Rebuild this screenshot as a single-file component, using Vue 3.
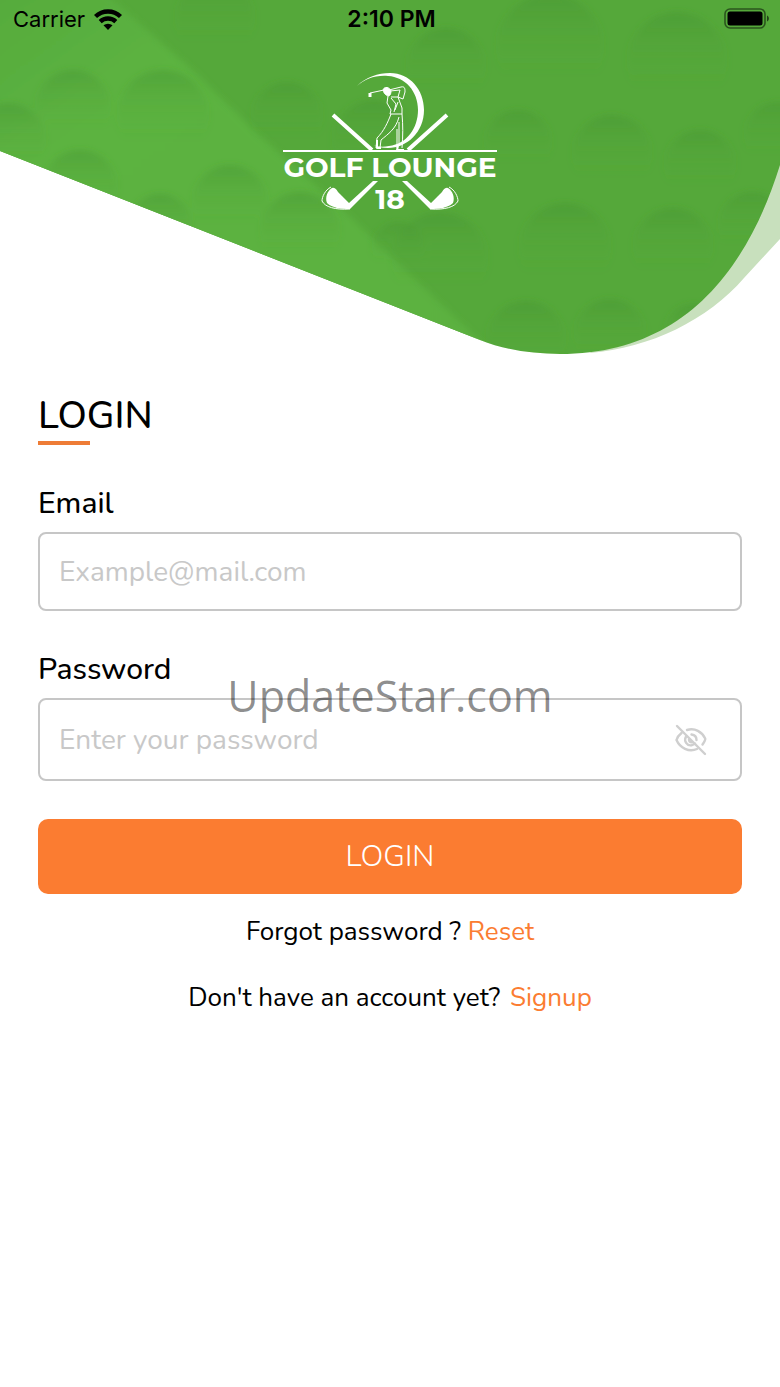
<script setup>
import { ref } from 'vue'

const email = ref('')
const password = ref('')
const showPassword = ref(false)

// Dimples of the golf ball texture: centre x, top y, radius
const dimples = [
  [8, 103, 38], [73, 70, 38], [163, 70, 46], [80, 150, 38], [230, 165, 38],
  [160, 194, 32], [287, 82, 36], [374, 100, 42], [446, 28, 40], [300, 192, 40],
  [398, 222, 26], [440, 212, 48], [518, 110, 34], [550, -6, 54], [677, 12, 50],
  [612, 115, 40], [700, 130, 36], [778, 102, 34], [565, 203, 46], [673, 208, 40],
  [752, 192, 34], [526, 301, 40], [610, 299, 36], [694, 304, 30], [215, -20, 40],
]
</script>

<template>
  <main class="screen">
    <header class="hero">
      <svg class="art" viewBox="0 0 780 356" aria-hidden="true">
        <defs>
          <linearGradient id="dimple" x1="0" y1="0" x2="0" y2="1">
            <stop offset="0" stop-color="#43922f" stop-opacity="0.42" />
            <stop offset="0.3" stop-color="#4c9a36" stop-opacity="0.2" />
            <stop offset="0.75" stop-color="#55a83b" stop-opacity="0" />
          </linearGradient>
          <linearGradient id="shine" x1="0" y1="0" x2="1" y2="1">
            <stop offset="0" stop-color="#56aa3c" />
            <stop offset="0.3" stop-color="#5cb341" />
            <stop offset="1" stop-color="#5bb13f" />
          </linearGradient>
          <filter id="soft" x="-10%" y="-10%" width="120%" height="120%">
            <feGaussianBlur stdDeviation="3" />
          </filter>
          <clipPath id="wave">
            <path d="M0 0H780V165C744 280 676 354 560 354C532 354 505 350 480 340L0 151Z" />
          </clipPath>
        </defs>
        <path fill="#c8e0bd" d="M780 150V239L744 278C708 320 650 348 590 353Z" />
        <g clip-path="url(#wave)">
          <path fill="#55a83a" d="M0 0H780V356H0Z" />
          <path
            fill="url(#shine)"
            filter="url(#soft)"
            d="M-20 -20H90L190 68L260 136L345 212L420 284L500 360H-20Z"
          />
          <g filter="url(#soft)">
            <circle
              v-for="([x, top, r], i) in dimples"
              :key="i"
              :cx="x"
              :cy="top + r"
              :r="r"
              fill="url(#dimple)"
            />
          </g>
        </g>

        <g class="logo" fill="none" stroke="#fff">
          <path
            fill="#fff"
            stroke="none"
            d="M357 86C366 77 378 73 390 73C410 73 424 90 424 110C424 132 407 148 388 148C382 148 377 147 373 145C378 147 384 147 389 146C407 144 418 128 418 110C418 91 405 77 388 76C375 75 365 79 357 86Z"
          />
          <path stroke-width="4" d="M333 115L372 150M447 115L408 150" />
          <path stroke-width="2" d="M283 151H497" />
          <path
            fill="#fff"
            stroke="none"
            d="M332 188Q335 187 338 192L349 203L373 181H378L350 209C341 209 332 208 327 203C325 198 327 191 332 188Z"
          />
          <path
            fill="#fff"
            stroke="none"
            d="M448 188Q445 187 442 192L431 203L407 181H402L430 209C439 209 448 208 453 203C455 198 453 191 448 188Z"
          />
          <path d="M331 187C325 190 322 197 322 201C325 207 335 210 350 209" />
          <path d="M449 187C455 190 458 197 458 201C455 207 445 210 430 209" />

          <path d="M370 93L384 90" />
          <path stroke-width="3" d="M370 93V97" />
          <path fill="#fff" d="M383 90C384 86 390 87 391 91C391 94 390 96 388 96C386 95 384 94 383 90Z" />
          <path d="M389 90L401 87C405 86 405 89 405 92L403 99L398 97L400 90L390 91" />
          <path d="M388 96L387 103L391 110L390 114H402V108L398 97L391 97M391 98L396 104L394 112M398 102L395 110" />
          <path d="M391 114C388 122 384 131 377 138L376 148M402 114C403 125 403 136 402 148M399 117C396 129 388 134 381 140L380 148M397 129V148M399 122V144" />
          <path stroke-width="2" d="M377 140V148H381M398 146L397 150H404" />
        </g>
        <g class="logo-text" fill="#fff" text-anchor="middle">
          <text x="390" y="177" font-size="28">GOLF LOUNGE</text>
          <text x="390" y="209" font-size="28">18</text>
        </g>
      </svg>

      <div class="status">
        <span class="carrier">
          Carrier
          <svg width="28" height="21" viewBox="0 0 28 21" aria-hidden="true">
            <g fill="none" stroke="#000" stroke-width="4.400">
              <path d="M1.500 7.500A18 18 0 0 1 26.500 7.500" />
              <path d="M6.200 12.600A11.500 11.500 0 0 1 21.800 12.600" />
            </g>
            <path d="M9.500 16.300A7 7 0 0 1 18.500 16.300L14 21Z" />
          </svg>
        </span>
        <time class="clock">2:10 PM</time>
        <svg class="battery" width="46" height="22" viewBox="0 0 46 22" aria-hidden="true">
          <rect x="1" y="1" width="40" height="19" rx="5" fill="none" stroke="#000" stroke-opacity=".5" stroke-width="1.600" />
          <rect x="3.500" y="3.500" width="35" height="14" rx="2.500" />
          <path d="M43 7.500C45.500 8.500 45.500 12.500 43 13.500Z" fill-opacity=".6" />
        </svg>
      </div>
    </header>

    <form class="form" @submit.prevent>
      <h1>LOGIN</h1>

      <label for="email">Email</label>
      <input id="email" v-model="email" class="field" type="email" placeholder="Example@mail.com" />

      <label for="password">Password</label>
      <div class="field password">
        <input
          id="password"
          v-model="password"
          :type="showPassword ? 'text' : 'password'"
          placeholder="Enter your password"
        />
        <button
          class="eye"
          type="button"
          aria-label="Show password"
          @click="showPassword = !showPassword"
        >
          <svg width="32" height="32" viewBox="0 0 32 32" fill="none" stroke="#cfcfcf" stroke-width="2.400" stroke-linecap="round">
            <path d="M12 6C20 3.500 27 8 30.200 14.500C30.500 15.500 30 17 27.500 20.500" />
            <path d="M6.500 9C4 11 2 14 1.500 16C5 24 14 28.500 22 25" />
            <path d="M11 12.500C8.500 17 12 22 16.500 21.300C18 21 19 20.500 20 19.500" />
            <path d="M16.500 10.500C20 11 21.500 13 21.500 16" />
            <path d="M14 15.500C14 17.500 15 18.500 17 18.300" />
            <path d="M2 2L30 30" />
          </svg>
        </button>
        <span class="watermark">UpdateStar.com</span>
      </div>

      <button class="submit" type="submit">LOGIN</button>

      <p class="forgot">Forgot password ? <a href="#reset">Reset</a></p>
      <p class="signup">Don't have an account yet? <a href="#signup">Signup</a></p>
    </form>
  </main>
</template>

<style>
body {
  background: #fff;
}
</style>

<style scoped>
.screen {
  min-height: 100vh;
  color: #000;
  font-family: Nunito, Lato, sans-serif;
}

.hero {
  display: grid;
}

.art,
.status {
  grid-area: 1 / 1;
}

.art {
  display: block;
  width: 100%;
}

.logo {
  stroke-linejoin: round;
}

.logo-text {
  font-family: Montserrat, Inter, sans-serif;
  font-weight: 700;
}

.status {
  display: grid;
  grid-template-columns: 1fr auto 1fr;
  align-items: center;
  align-self: start;
  height: 38px;
  padding: 0 10px 0 13px;
  font: 500 22px/28px Inter, sans-serif;
}

.carrier {
  display: flex;
  align-items: center;
  gap: 9px;
  font-weight: 400;
}

.clock {
  font-size: 23px;
  font-weight: 600;
}

.battery {
  justify-self: end;
}

.form {
  display: flex;
  flex-direction: column;
  padding: 36px 38px;
}

h1 {
  margin: 0 0 39px;
  font-size: 38px;
  font-weight: 500;
  line-height: 48px;
}

h1::after {
  content: "";
  display: block;
  width: 52px;
  height: 4px;
  margin-top: 1px;
  background: #ee7c36;
}

label {
  margin-bottom: 8px;
  font-size: 30px;
  font-weight: 500;
  line-height: 40px;
}

.field {
  box-sizing: border-box;
  height: 79px;
  margin: 0 0 39px;
  border: 2px solid #c6c6c6;
  border-radius: 8px;
  background: #fff;
}

input {
  min-width: 0;
  padding: 0 19px;
  color: #000;
  font: 400 28px/36px Nunito, Lato, sans-serif;
}

input::placeholder {
  color: #c8c8c8;
  opacity: 1;
}

.password {
  position: relative;
  display: flex;
  align-items: center;
  height: 83px;
  margin-bottom: 38px;
  padding-right: 33px;
}

.password input {
  flex: 1;
  border: 0;
  background: none;
}

.eye {
  display: flex;
  padding: 0;
  border: 0;
  background: none;
}

.watermark {
  position: absolute;
  top: -36px;
  left: 0;
  right: 0;
  color: rgb(0 0 0 / 0.45);
  font: 400 43px/64px "Open Sans", sans-serif;
  text-align: center;
  pointer-events: none;
}

.submit {
  height: 75px;
  border: 0;
  border-radius: 10px;
  background: #fb7c31;
  color: #fff;
  font: 300 30px/40px Nunito, Lato, sans-serif;
}

p {
  margin: 0;
  font-size: 26px;
  line-height: 36px;
  text-align: center;
}

.forgot {
  margin: 20px 0 30px;
}

.signup a {
  margin-left: 3px;
}

a {
  color: #fb7c31;
  text-decoration: none;
}
</style>
